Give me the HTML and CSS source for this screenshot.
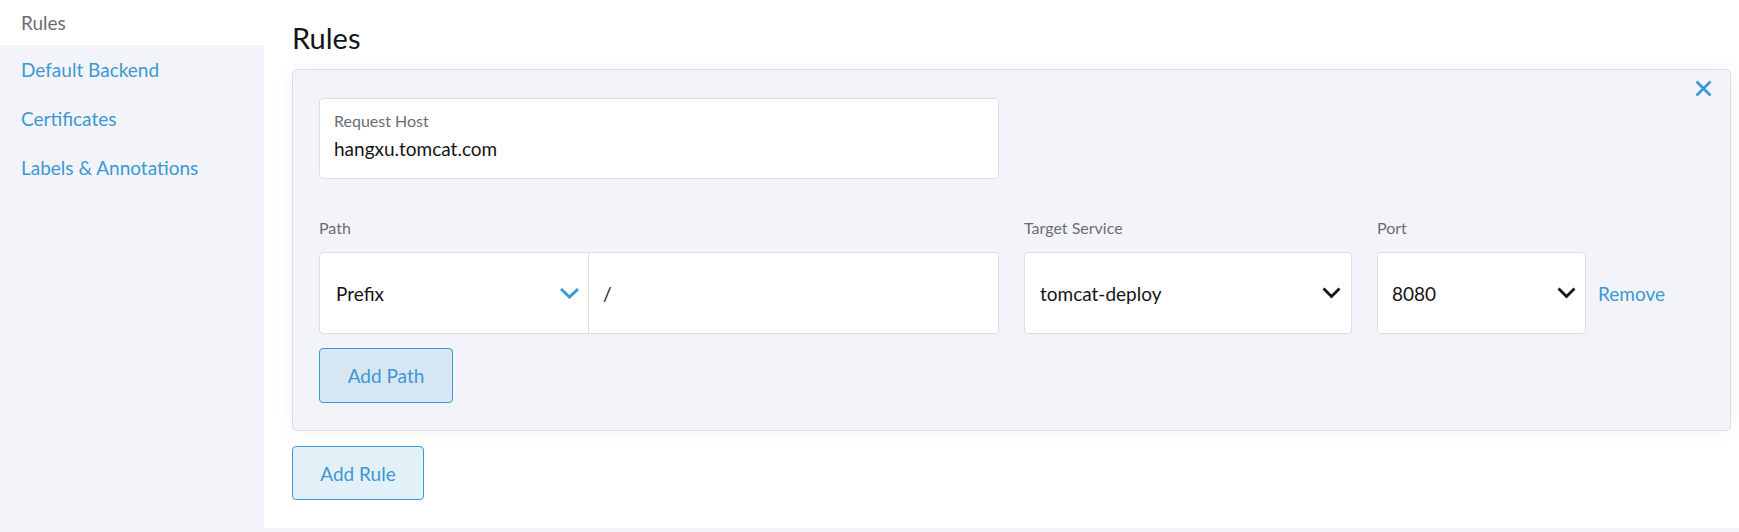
FILE: index.html
```html
<!DOCTYPE html>
<html>
<head>
<meta charset="utf-8">
<link rel="stylesheet" href="styles.css">
</head>
<body>
<div class="layout">
  <nav class="sidebar">
    <div class="tab active">Rules</div>
    <div class="tab">Default Backend</div>
    <div class="tab">Certificates</div>
    <div class="tab">Labels &amp; Annotations</div>
  </nav>
  <main class="main">
    <h2 class="title">Rules</h2>
    <section class="card">
      <button class="close" aria-label="Remove rule">
        <svg width="17" height="17" viewBox="0 0 17 17"><path d="M1.5 1.5 L15.5 15.5 M15.5 1.5 L1.5 15.5" stroke="#3d98d3" stroke-width="2.8" fill="none"/></svg>
      </button>
      <div class="host-box">
        <div class="field-label">Request Host</div>
        <div class="field-value">hangxu.tomcat.com</div>
      </div>
      <div class="path-row">
        <div class="col col-path">
          <div class="col-label">Path</div>
          <div class="path-group">
            <div class="path-type">
              <span>Prefix</span>
              <svg width="21" height="12" viewBox="0 0 21 12"><path d="M2 2 L10.5 10 L19 2" stroke="#3d98d3" stroke-width="3" fill="none"/></svg>
            </div>
            <div class="path-input">/</div>
          </div>
        </div>
        <div class="col col-target">
          <div class="col-label">Target Service</div>
          <div class="select select-target">
            <span>tomcat-deploy</span>
            <svg width="19" height="12" viewBox="0 0 19 12"><path d="M1.5 1.5 L9.5 9.5 L17.5 1.5" stroke="#141419" stroke-width="2.8" fill="none"/></svg>
          </div>
        </div>
        <div class="col col-port">
          <div class="col-label">Port</div>
          <div class="port-row">
            <div class="select select-port">
              <span>8080</span>
              <svg width="19" height="12" viewBox="0 0 19 12"><path d="M1.5 1.5 L9.5 9.5 L17.5 1.5" stroke="#141419" stroke-width="2.8" fill="none"/></svg>
            </div>
            <a class="remove">Remove</a>
          </div>
        </div>
      </div>
      <button class="btn btn-path">Add Path</button>
    </section>
    <button class="btn btn-rule">Add Rule</button>
  </main>
</div>
</body>
</html>
```
FILE: styles.css
```css
* { box-sizing: border-box; }
html, body { margin: 0; padding: 0; }
body {
  background: #f3f4f9;
  font-family: Lato, "Noto Sans", sans-serif;
  color: #141419;
  height: 532px;
  overflow: hidden;
}
.layout {
  display: flex;
  height: 528px;
}
.sidebar {
  width: 264px;
  flex: none;
  background: #f3f4f9;
}
.tab {
  height: 49px;
  display: flex;
  align-items: center;
  padding-left: 21px;
  font-size: 19px;
  color: #3d98d3;
}
.tab.active {
  height: 45px;
  background: #ffffff;
  color: #6c6c76;
}
.main {
  flex: 1;
  background: #ffffff;
  padding: 20px 8px 28px 28px;
  display: flex;
  flex-direction: column;
  align-items: flex-start;
}
.title {
  margin: 0 0 13px 0;
  font-size: 29px;
  line-height: 36px;
  font-weight: 400;
  color: #141419;
}
.card {
  position: relative;
  width: 1439px;
  background: #f3f4f9;
  border: 1px solid #dcdee7;
  border-radius: 5px;
  padding: 28px 26px 27px 26px;
  box-shadow: 0 0 20px rgba(0, 0, 0, 0.05);
}
.close {
  position: absolute;
  top: 10px;
  right: 18px;
  width: 17px;
  height: 17px;
  padding: 0;
  border: 0;
  background: none;
  display: flex;
}
.host-box {
  width: 680px;
  height: 81px;
  background: #ffffff;
  border: 1px solid #dcdee7;
  border-radius: 4px;
  padding: 13px 14px;
}
.field-label {
  font-size: 16px;
  line-height: 18px;
  color: #6c6c76;
}
.field-value {
  margin-top: 8px;
  font-size: 19px;
  line-height: 22px;
  color: #141419;
}
.path-row {
  display: flex;
  margin-top: 40px;
  gap: 25px;
}
.col-label {
  font-size: 16px;
  line-height: 18px;
  color: #6c6c76;
  margin-bottom: 15px;
}
.col-path { width: 680px; }
.col-target { width: 328px; }
.path-group {
  display: flex;
  height: 82px;
  background: #ffffff;
  border: 1px solid #dcdee7;
  border-radius: 4px;
}
.path-type {
  width: 269px;
  flex: none;
  display: flex;
  align-items: center;
  justify-content: space-between;
  padding: 0 8px 0 16px;
  border-right: 1px solid #dcdee7;
  font-size: 19px;
}
.path-input {
  flex: 1;
  display: flex;
  align-items: center;
  padding-left: 14px;
  font-size: 19px;
}
.select {
  height: 82px;
  background: #ffffff;
  border: 1px solid #dcdee7;
  border-radius: 4px;
  display: flex;
  align-items: center;
  justify-content: space-between;
  font-size: 19px;
}
.select-target {
  width: 328px;
  padding: 0 10px 0 15px;
}
.port-row {
  display: flex;
  align-items: center;
  gap: 12px;
}
.select-port {
  width: 209px;
  padding: 0 9px 0 14px;
}
.remove {
  font-size: 19px;
  color: #3d98d3;
  cursor: pointer;
}
.btn {
  font-family: Lato, "Noto Sans", sans-serif;
  font-size: 19px;
  color: #3d98d3;
  background: rgba(61, 152, 211, 0.15);
  border: 1px solid #3d98d3;
  border-radius: 4px;
  padding: 0;
}
.btn-path {
  margin-top: 14px;
  width: 134px;
  height: 55px;
}
.btn-rule {
  margin-top: 15px;
  width: 132px;
  height: 54px;
}
```
